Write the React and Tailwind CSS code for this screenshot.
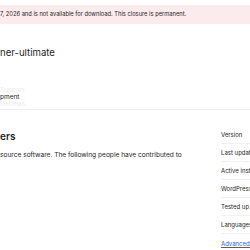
export default function App() {
  const meta = ["Version", "Last updated", "Active installations", "WordPress version", "Tested up to", "Languages"];

  return (
    <div className="w-[250px] h-[250px] overflow-hidden bg-white text-[#1e1e1e]" style={{ fontFamily: "Inter, 'Liberation Sans', sans-serif" }}>
      {/* closure notice */}
      <div className="mt-[5px] h-[19px] bg-[#fcebec] flex items-center whitespace-nowrap text-[5.75px]">
        7, 2026 and is not available for download. This closure is permanent.
      </div>

      {/* plugin title */}
      <h1 className="mt-[22px] text-[9.6px] leading-[14px] whitespace-nowrap">ner-ultimate</h1>

      {/* tabs */}
      <div className="mt-[27px] flex flex-col text-[6.5px] leading-[7px] whitespace-nowrap">
        <span className="text-[#ececec]">Support</span>
        <span>pment</span>
        <span className="text-[#ececec]">Reviews</span>
      </div>
      <div className="mt-[1px] h-px bg-[#f0f0f0]" />

      <div className="flex">
        {/* main column */}
        <div className="w-[221px] shrink-0">
          <h2 className="mt-[20px] text-[10px] leading-[12px] font-semibold">ers</h2>
          <p className="mt-[9px] text-[6.6px] whitespace-nowrap">
            source software. The following people have contributed to
          </p>
        </div>

        {/* sidebar */}
        <div className="mt-[16px] flex-1 text-[6px] whitespace-nowrap overflow-hidden">
          {meta.map((m) => (
            <div key={m} className="h-[18px] flex items-center border-b border-[#f0f0f0]">
              {m}
            </div>
          ))}
          <div className="mt-[5px] text-[#3858e9] underline">Advanced View</div>
        </div>
      </div>
    </div>
  );
}
